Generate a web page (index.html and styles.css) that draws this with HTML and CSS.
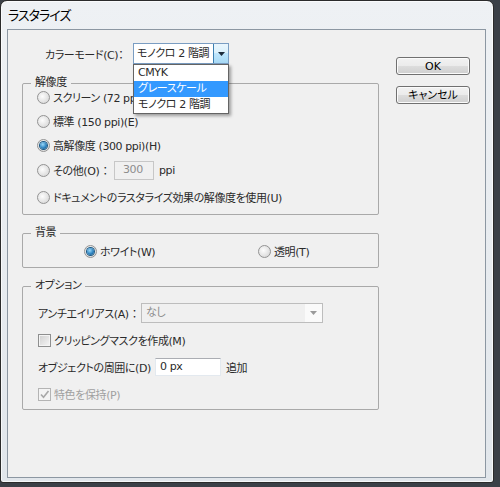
FILE: index.html
```html
<!DOCTYPE html>
<html lang="ja">
<head>
  <meta charset="UTF-8">
  <title>ラスタライズ</title>
  <link rel="stylesheet" href="styles.css">
</head>
<body>

  <div class="window">
    <div class="titlebar">ラスタライズ</div>

    <div class="client">
      <div class="main">
        <!-- カラーモード -->
        <div class="mode-row">
          <span class="mode-label">カラーモード(C)：</span>
          <div class="combo combo-open">
            <span class="combo-value">モノクロ 2 階調</span>
            <span class="combo-arrow">
              <svg width="7" height="4" viewBox="0 0 7 4"><path d="M0 0h7L3.5 4z" fill="#1c2b3a"/></svg>
            </span>
            <ul class="combo-list">
              <li>CMYK</li>
              <li class="selected">グレースケール</li>
              <li>モノクロ 2 階調</li>
            </ul>
          </div>
        </div>

        <!-- 解像度 -->
        <div class="group group-res">
          <span class="group-title">解像度</span>
          <div class="opt-row"><span class="radio"></span>スクリーン (72 ppi)(S)</div>
          <div class="opt-row"><span class="radio"></span>標準 (150 ppi)(E)</div>
          <div class="opt-row"><span class="radio checked"></span>高解像度 (300 ppi)(H)</div>
          <div class="opt-row opt-row-tall">
            <span class="radio"></span><span class="other-label">その他(O) ：</span>
            <span class="text-box text-box-disabled ppi-box">300</span>
            <span class="unit">ppi</span>
          </div>
          <div class="opt-row opt-row-last"><span class="radio"></span>ドキュメントのラスタライズ効果の解像度を使用(U)</div>
        </div>

        <!-- 背景 -->
        <div class="group group-bg">
          <span class="group-title">背景</span>
          <div class="bg-options">
            <div class="opt-row"><span class="radio checked"></span>ホワイト(W)</div>
            <div class="opt-row"><span class="radio"></span>透明(T)</div>
          </div>
        </div>

        <!-- オプション -->
        <div class="group group-opt">
          <span class="group-title">オプション</span>
          <div class="opt-row">
            <span class="aa-label">アンチエイリアス(A) ：</span>
            <div class="combo combo-disabled">
              <span class="combo-value">なし</span>
              <span class="combo-arrow">
                <svg width="7" height="4" viewBox="0 0 7 4"><path d="M0 0h7L3.5 4z" fill="#9a9a9a"/></svg>
              </span>
            </div>
          </div>
          <div class="opt-row clip-row"><span class="checkbox"></span>クリッピングマスクを作成(M)</div>
          <div class="opt-row">
            <span class="pad-label">オブジェクトの周囲に(D)</span>
            <span class="text-box pad-box">0 px</span>
            <span class="unit">追加</span>
          </div>
          <div class="opt-row disabled">
            <span class="checkbox checkbox-disabled">
              <svg width="11" height="11" viewBox="0 0 11 11"><path d="M2 5.5l2.5 2.8L9.5 2" fill="none" stroke="#a8a8a8" stroke-width="1.6"/></svg>
            </span>特色を保持(P)
          </div>
        </div>
      </div>

      <div class="buttons">
        <button class="btn">OK</button>
        <button class="btn">キャンセル</button>
      </div>
    </div>
  </div>

</body>
</html>
```

FILE: styles.css
```css
* {
  box-sizing: border-box;
}

body {
  margin: 0;
  height: 487px;
  background: #3b4047;
  font-family: "DejaVu Sans", "Noto Sans CJK JP", sans-serif;
  font-size: 11px;
  letter-spacing: -0.4px;
  font-feature-settings: "palt";
  color: #2a2a2a;
}

/* ウィンドウ枠 */
.window {
  width: 494px;
  height: 483px;
  border: 1px solid #2b2b2b;
  border-radius: 7px 7px 3px 3px;
  background: linear-gradient(180deg, #eef1f4, #e1e6eb);
  box-shadow: inset 0 0 0 1px rgba(255, 255, 255, 0.7);
  padding: 0 7px 4px 6px;
  display: flex;
  flex-direction: column;
}

.titlebar {
  height: 28px;
  line-height: 28px;
  padding-left: 1px;
  font-family: "Noto Sans CJK JP", sans-serif;
  font-size: 13px;
  letter-spacing: -1px;
  color: #000;
}

.client {
  flex: 1;
  display: flex;
  border: 1px solid #8c97a2;
  background: #f0f0f0;
  padding: 13px 0 0 14px;
}

.main {
  width: 357px;
}

/* カラーモード行 */
.mode-row {
  display: flex;
  align-items: center;
  height: 21px;
  padding-left: 23px;
}

.mode-label {
  width: 88px;
}

.combo {
  position: relative;
  display: flex;
  width: 96px;
  height: 21px;
  border: 1px solid #7a9dc2;
  background: #fff;
}

.combo-value {
  flex: 1;
  padding-left: 3px;
  line-height: 19px;
  white-space: nowrap;
}

.combo-arrow {
  width: 15px;
  display: flex;
  align-items: center;
  justify-content: center;
  border-left: 1px solid #3c7fb1;
  background: linear-gradient(180deg, #eaf6fd 0%, #d9f0fc 50%, #bee6fd 50%, #a7d9f5 100%);
}

.combo-list {
  position: absolute;
  top: 20px;
  left: -1px;
  width: 96px;
  margin: 0;
  padding: 0;
  list-style: none;
  background: #fff;
  border: 1px solid #646464;
  box-shadow: 2px 2px 3px rgba(0, 0, 0, 0.35);
  z-index: 2;
}

.combo-list li {
  height: 16px;
  line-height: 16px;
  padding-left: 4px;
  white-space: nowrap;
}

.combo-list li.selected {
  background: #3399ff;
  color: #fff;
}

.combo-disabled {
  width: 182px;
  height: 20px;
  border-color: #bdbdbd;
  background: #f0f0f0;
  color: #8d8d8d;
}

.combo-disabled .combo-value {
  line-height: 18px;
  padding-left: 4px;
}

.combo-disabled .combo-arrow {
  width: 17px;
  border-left: none;
  background: #fafafa;
}

/* グループボックス */
.group {
  position: relative;
  border: 1px solid #a9a9a9;
  border-radius: 2px;
}

.group-title {
  position: absolute;
  top: -9px;
  left: 8px;
  padding: 0 4px;
  line-height: 16px;
  background: #f0f0f0;
}

.group-res {
  margin-top: 19px;
  padding: 1px 0 5px 14px;
}

.group-bg {
  margin-top: 18px;
  padding: 5px 0 4px 61px;
}

.group-opt {
  margin-top: 18px;
  padding: 14px 0 3px 15px;
}

.opt-row {
  display: flex;
  align-items: center;
  height: 24px;
  white-space: nowrap;
}

.opt-row-tall {
  height: 26px;
}

.opt-row-last {
  margin-top: 2px;
}

.group-opt .opt-row + .opt-row {
  margin-top: 3px;
}

.group-opt .clip-row {
  margin-top: 6px;
}

.bg-options {
  display: grid;
  grid-template-columns: 174px auto;
}

.disabled {
  color: #a0a0a0;
}

/* ラジオボタン */
.radio {
  position: relative;
  flex-shrink: 0;
  width: 13px;
  height: 13px;
  margin-right: 3px;
  border: 1px solid #939393;
  border-radius: 50%;
  background: radial-gradient(circle at 40% 40%, #fdfdfd, #e2e2e2 60%, #cfcfcf);
}

.radio.checked::after {
  content: "";
  position: absolute;
  left: 2px;
  top: 2px;
  width: 7px;
  height: 7px;
  border-radius: 50%;
  background: radial-gradient(circle at 40% 35%, #9ad8f8, #2e84c1 55%, #0e4a78);
  box-shadow: 0 0 0 1px #1b5884;
}

/* チェックボックス */
.checkbox {
  display: flex;
  align-items: center;
  justify-content: center;
  flex-shrink: 0;
  width: 13px;
  height: 13px;
  margin-right: 3px;
  border: 1px solid #8e8f8f;
  background: linear-gradient(135deg, #cfcfcf, #f6f6f6);
  box-shadow: inset 0 0 0 1px #f4f4f4;
}

.checkbox-disabled {
  border-color: #b4b4b4;
  background: #f4f4f4;
  box-shadow: none;
}

/* テキスト入力 */
.text-box {
  display: inline-block;
  flex-shrink: 0;
  height: 18px;
  line-height: 16px;
  padding-left: 4px;
  border: 1px solid #e3e9ef;
  border-top-color: #abadb3;
  background: #fff;
}

.text-box-disabled {
  border: 1px solid #c7c7c7;
  background: #f0f0f0;
  color: #8d8d8d;
}

.other-label {
  width: 61px;
}

.ppi-box {
  width: 40px;
  height: 19px;
  padding-left: 8px;
}

.unit {
  margin-left: 5px;
}

.aa-label {
  width: 103px;
}

.pad-label {
  margin-right: 4px;
}

.pad-box {
  width: 66px;
}

/* 右側のボタン */
.buttons {
  display: flex;
  flex-direction: column;
  gap: 11px;
  margin: 14px 0 0 17px;
}

.btn {
  width: 74px;
  height: 18px;
  padding: 0;
  border: 1px solid #707070;
  border-radius: 3px;
  background: linear-gradient(180deg, #f2f2f2 0%, #ebebeb 50%, #dddddd 50%, #cfcfcf 100%);
  box-shadow: inset 0 0 0 1px #fbfbfb;
  font: inherit;
  line-height: 15px;
  color: #000;
}
```
